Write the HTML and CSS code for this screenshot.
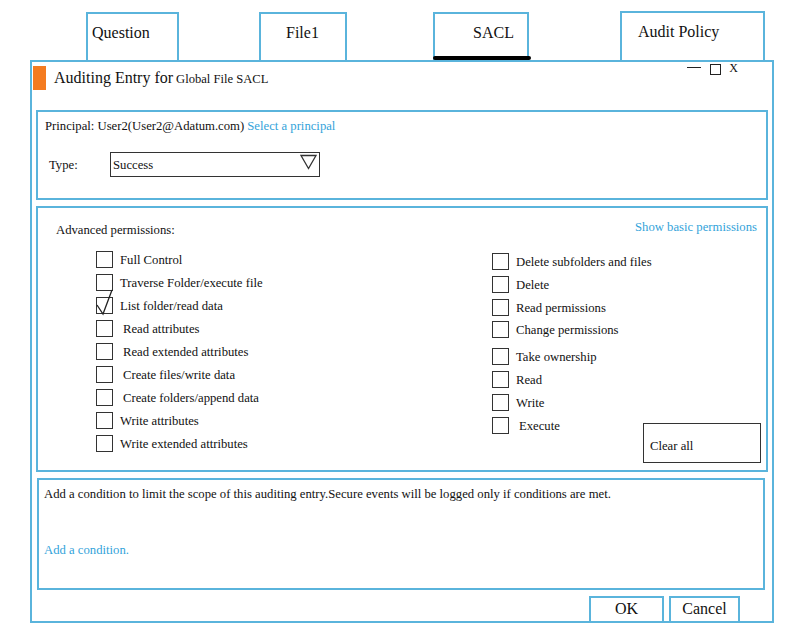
FILE: index.html
```html
<!DOCTYPE html>
<html>
<head>
<meta charset="utf-8">
<link rel="stylesheet" href="styles.css">
</head>
<body>
<div class="tabs">
  <div class="tab tab-question">Question</div>
  <div class="tab tab-file">File1</div>
  <div class="tab tab-sacl">SACL</div>
  <div class="tab tab-audit">Audit Policy</div>
</div>
<div class="window">
  <div class="titlebar">
    <div class="title-mark"></div>
    <div class="title-text">Auditing Entry for <span class="title-small">Global File SACL</span></div>
    <div class="win-controls">
      <span class="ctl-min"></span>
      <span class="ctl-max"></span>
      <span class="ctl-close">X</span>
    </div>
  </div>

  <div class="sec sec-principal">
    <div class="principal">Principal: User2(User2@Adatum.com) <span class="link">Select a principal</span></div>
    <div class="type-row">
      <span class="type-label">Type:</span>
      <div class="select">
        <span>Success</span>
        <svg class="tri" width="17" height="16" viewBox="0 0 17 16"><polygon points="1,1.5 16,1.5 8.5,14.5" fill="none" stroke="#333" stroke-width="1.3"/></svg>
      </div>
    </div>
  </div>

  <div class="sec sec-perms">
    <div class="perm-head">
      <span class="perm-title">Advanced permissions:</span>
      <span class="link">Show basic permissions</span>
    </div>
    <div class="perm-body">
      <div class="col col-left">
        <div class="row"><span class="box"></span><span>Full Control</span></div>
        <div class="row"><span class="box"></span><span>Traverse Folder/execute file</span></div>
        <div class="row"><span class="box checked"><svg class="check" width="20" height="28" viewBox="0 0 20 28"><polyline points="1,17 7,26 16,2" fill="none" stroke="#222" stroke-width="1.3"/></svg></span><span>List folder/read data</span></div>
        <div class="row"><span class="box"></span><span class="t-in">Read attributes</span></div>
        <div class="row"><span class="box"></span><span class="t-in">Read extended attributes</span></div>
        <div class="row"><span class="box"></span><span class="t-in">Create files/write data</span></div>
        <div class="row"><span class="box"></span><span class="t-in">Create folders/append data</span></div>
        <div class="row"><span class="box"></span><span>Write attributes</span></div>
        <div class="row"><span class="box"></span><span>Write extended attributes</span></div>
      </div>
      <div class="col col-right">
        <div class="rlist">
          <div class="row"><span class="box"></span><span>Delete subfolders and files</span></div>
          <div class="row"><span class="box"></span><span>Delete</span></div>
          <div class="row"><span class="box"></span><span>Read permissions</span></div>
          <div class="row row-short"><span class="box"></span><span>Change permissions</span></div>
          <div class="row row-gap"><span class="box"></span><span>Take ownership</span></div>
          <div class="row"><span class="box"></span><span>Read</span></div>
          <div class="row"><span class="box"></span><span>Write</span></div>
          <div class="row"><span class="box"></span><span class="t-in">Execute</span></div>
        </div>
        <div class="clear-btn">Clear all</div>
      </div>
    </div>
  </div>

  <div class="sec sec-cond">
    <div>Add a condition to limit the scope of this auditing entry.Secure events will be logged only if conditions are met.</div>
    <div class="link add-cond">Add a condition.</div>
  </div>

  <div class="footer">
    <div class="btn btn-ok">OK</div>
    <div class="btn btn-cancel">Cancel</div>
  </div>
</div>
</body>
</html>
```

FILE: styles.css
```css
* { box-sizing: border-box; }
body {
  margin: 0;
  background: #fff;
  font-family: "Liberation Serif", "Times New Roman", serif;
  color: #111;
}
.link { color: #33a3da; }

/* tabs */
.tabs {
  display: flex;
  align-items: flex-end;
  height: 60px;
}
.tab {
  height: 48px;
  border: 2px solid #5ab4dc;
  border-bottom: none;
  font-size: 16px;
  line-height: 20px;
  padding-top: 9px;
}
.tab-question { margin-left: 86px; width: 93px; padding-left: 4px; }
.tab-file { margin-left: 80px; width: 88px; padding-left: 25px; }
.tab-sacl {
  margin-left: 86px; width: 96px; padding-left: 38px;
  position: relative;
}
.tab-sacl::after {
  content: "";
  position: absolute;
  left: -2px; right: -4px; bottom: 0;
  height: 4px;
  background: #000;
  border-radius: 2px;
}
.tab-audit { margin-left: 91px; width: 145px; height: 49px; padding-left: 16px; }

/* window */
.window {
  margin-left: 30px;
  width: 744px;
  height: 563px;
  border: 2px solid #5ab4dc;
  display: flex;
  flex-direction: column;
}
.titlebar {
  height: 48px;
  display: flex;
  align-items: flex-start;
}
.title-mark {
  width: 13px;
  height: 24px;
  background: #f47b20;
  margin: 4px 0 0 1px;
}
.title-text {
  margin: 4px 0 0 8px;
  font-size: 16px;
  line-height: 24px;
  flex: 1;
}
.title-small { font-size: 12.6px; margin-left: -1px; }
.win-controls {
  display: flex;
  align-items: flex-start;
  margin-right: 34px;
  height: 14px;
}
.ctl-min {
  width: 14px;
  height: 0;
  border-top: 1.5px solid #222;
  margin-top: 5px;
}
.ctl-max {
  width: 11px;
  height: 11px;
  border: 1.3px solid #222;
  margin: 2px 0 0 9px;
}
.ctl-close {
  font-size: 12px;
  line-height: 12px;
  margin-left: 8px;
}

/* sections */
.sec {
  border: 2px solid #5ab4dc;
  font-size: 12.7px;
  line-height: 16px;
}
.sec-principal {
  margin-left: 4px;
  width: 732px;
  height: 90px;
  padding: 6px 0 0 7px;
}
.type-row {
  display: flex;
  align-items: center;
  margin-top: 18px;
  padding-left: 4px;
}
.type-label { width: 61px; }
.select {
  width: 210px;
  height: 25px;
  border: 1.5px solid #333;
  display: flex;
  align-items: center;
  justify-content: space-between;
  padding: 0 2px 0 2px;
}
.tri { margin-top: -6px; }

.sec-perms {
  margin: 6px 0 0 4px;
  width: 732px;
  height: 266px;
  display: flex;
  flex-direction: column;
}
.perm-head {
  display: flex;
  justify-content: space-between;
  align-items: flex-start;
  padding: 11px 9px 0 18px;
}
.perm-title { margin-top: 3px; }
.perm-body {
  flex: 1;
  display: flex;
  padding: 10px 0 7px 58px;
}
.col-left { width: 396px; }
.col-right {
  flex: 1;
  display: flex;
  padding-top: 2px;
}
.rlist { width: 151px; }
.row {
  height: 23px;
  display: flex;
  align-items: center;
  white-space: nowrap;
}
.row-short { height: 21px; }
.row-gap { margin-top: 5px; }
.box {
  width: 17px;
  height: 17px;
  border: 1.4px solid #333;
  margin-right: 7px;
  flex: none;
  position: relative;
}
.check {
  position: absolute;
  left: -1px;
  top: -10px;
  overflow: visible;
}
.t-in { margin-left: 3px; }
.clear-btn {
  align-self: flex-end;
  width: 118px;
  height: 40px;
  border: 1.5px solid #333;
  padding: 14px 0 0 6px;
}

.sec-cond {
  margin: 6px 0 0 5px;
  width: 728px;
  height: 112px;
  padding: 6px 5px;
}
.add-cond { margin-top: 40px; }

.footer {
  margin-top: 6px;
  height: 25px;
  display: flex;
  justify-content: flex-end;
  padding-right: 32px;
}
.btn {
  height: 25px;
  border: 2px solid #5ab4dc;
  border-bottom: none;
  font-size: 16px;
  line-height: 22px;
  text-align: center;
}
.btn-ok { width: 75px; margin-right: 5px; }
.btn-cancel { width: 71px; }
```
